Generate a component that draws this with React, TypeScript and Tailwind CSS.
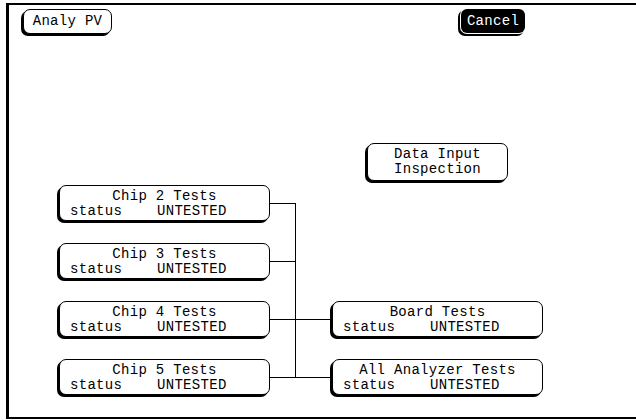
import React from "react";

const FONT = { fontFamily: '"Liberation Mono", "DejaVu Sans Mono", monospace' };

function TestNode({ title }: { title: string }) {
  return (
    <div className="h-[36px] w-[211px] rounded-[7px] border border-black bg-white pt-[3px] text-[14px] leading-[15px] tracking-[0.3px] text-black shadow-[-2px_2px_0_0_#000]">
      <div className="whitespace-pre text-center">{title}</div>
      <div className="whitespace-pre pl-[10px]">{"status    UNTESTED"}</div>
    </div>
  );
}

export default function App() {
  return (
    <div className="h-[420px] w-[636px] overflow-hidden bg-white" style={FONT}>
      <div className="ml-[6px] mt-[3px] h-[416px] w-[640px] border-b-[2px] border-l-[3px] border-t-[2px] border-black">
        {/* top bar */}
        <div className="flex pt-[4px]">
          <div className="ml-[14px] flex h-[25px] w-[89px] items-center justify-center rounded-[7px] border border-black bg-white text-[14px] leading-[15px] tracking-[0.3px] text-black shadow-[-2px_2px_0_0_#000]">
            Analy PV
          </div>
          <div className="ml-[349px] flex h-[24px] w-[64px] items-center justify-center rounded-[6px] bg-black text-[14px] leading-[15px] tracking-[0.3px] text-white shadow-[0_0_0_1px_#fff,-2px_2px_0_1px_#000]">
            Cancel
          </div>
        </div>

        {/* data input inspection */}
        <div className="ml-[358px] mt-[109px] h-[38px] w-[141px] rounded-[7px] border border-black bg-white pt-[3px] text-center text-[14px] leading-[15px] tracking-[0.3px] text-black shadow-[-2px_2px_0_0_#000]">
          <div>Data Input</div>
          <div>Inspection</div>
        </div>

        {/* diagram */}
        <div className="ml-[50px] mt-[4px] grid grid-cols-[211px_62px_211px] grid-rows-[36px_36px_36px_36px] gap-y-[22px]">
          <div className="col-start-1 row-start-1">
            <TestNode title="Chip 2 Tests" />
          </div>
          <div className="col-start-1 row-start-2">
            <TestNode title="Chip 3 Tests" />
          </div>
          <div className="col-start-1 row-start-3">
            <TestNode title="Chip 4 Tests" />
          </div>
          <div className="col-start-1 row-start-4">
            <TestNode title="Chip 5 Tests" />
          </div>
          <div className="col-start-2 row-span-4 row-start-1">
            <svg width="62" height="210" viewBox="0 0 62 210" className="block">
              <g stroke="#000" strokeWidth="1" shapeRendering="crispEdges" fill="none">
                <line x1="0" y1="18.5" x2="26" y2="18.5" />
                <line x1="0" y1="76.5" x2="26" y2="76.5" />
                <line x1="0" y1="134.5" x2="62" y2="134.5" />
                <line x1="0" y1="192.5" x2="62" y2="192.5" />
                <line x1="25.5" y1="18" x2="25.5" y2="193" />
              </g>
            </svg>
          </div>
          <div className="col-start-3 row-start-3">
            <TestNode title="Board Tests" />
          </div>
          <div className="col-start-3 row-start-4">
            <TestNode title="All Analyzer Tests" />
          </div>
        </div>
      </div>
    </div>
  );
}
